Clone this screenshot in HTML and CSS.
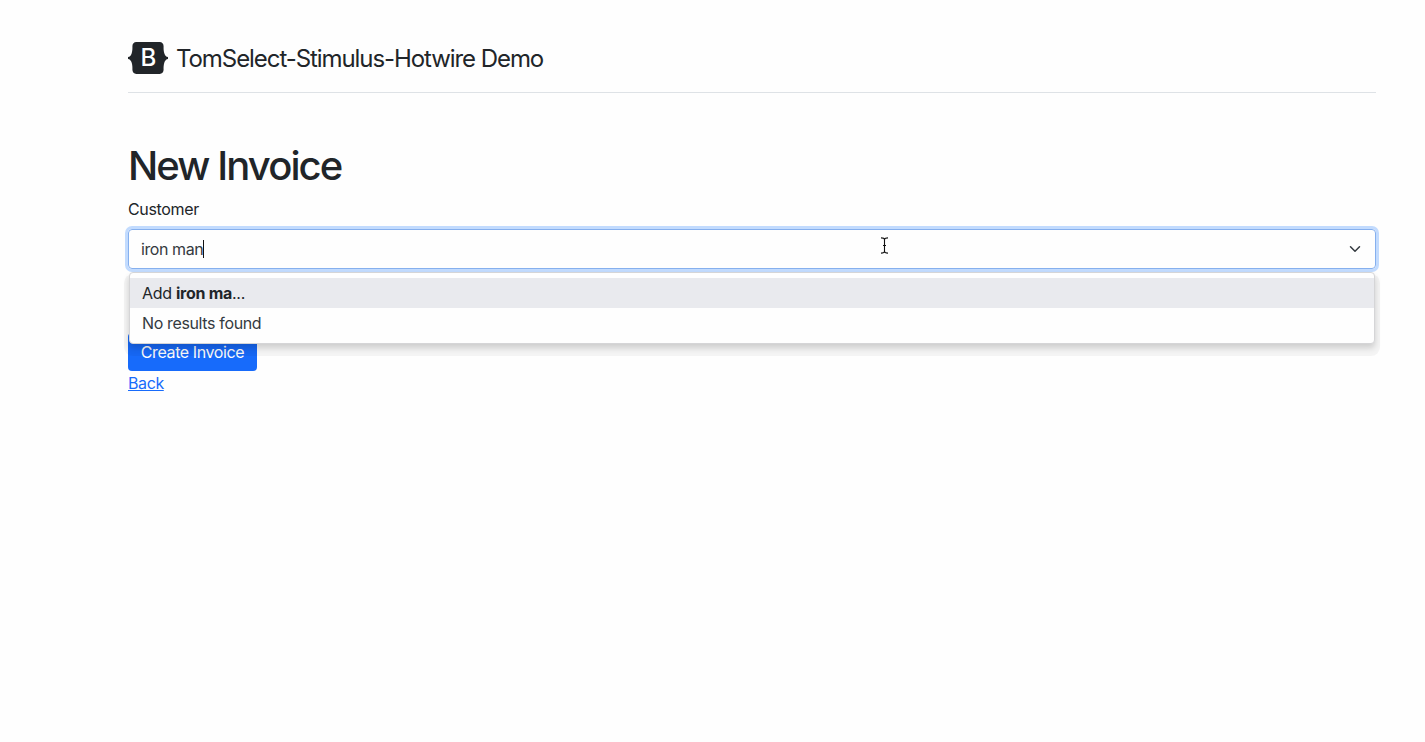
FILE: index.html
```html
<!DOCTYPE html>
<html lang="en">
<head>
<meta charset="utf-8">
<title>TomSelect-Stimulus-Hotwire Demo</title>
<link rel="stylesheet" href="styles.css">
</head>
<body>
<div class="container">
  <header class="site-header">
    <svg class="logo" width="40" height="32" viewBox="0 0 118 94" aria-hidden="true">
      <path fill="currentColor" d="M24.509 0c-6.733 0-11.715 5.893-11.492 12.284.214 6.14-.064 14.092-2.066 20.577C8.943 39.365 5.547 43.485 0 44.014v5.972c5.547.529 8.943 4.649 10.951 11.153 2.002 6.485 2.28 14.437 2.066 20.577C12.794 88.106 17.776 94 24.51 94H93.5c6.733 0 11.714-5.893 11.491-12.284-.214-6.14.064-14.092 2.066-20.577 2.009-6.504 5.396-10.624 10.943-11.153v-5.972c-5.547-.529-8.934-4.649-10.943-11.153-2.002-6.484-2.28-14.437-2.066-20.577C105.214 5.894 100.233 0 93.5 0H24.508z"/>
      <text class="logo-letter" x="60.500" y="71.500" text-anchor="middle">B</text>
    </svg>
    <span class="site-title">TomSelect-Stimulus-Hotwire Demo</span>
  </header>
  <main class="page">
    <h1 class="heading">New Invoice</h1>
    <label class="label" for="customer">Customer</label>
    <div class="select">
      <div class="control" id="customer">
        <span class="typed">iron man</span><span class="caret"></span>
        <svg class="chevron" width="16" height="12" viewBox="0 0 16 16" aria-hidden="true"><path fill="none" stroke="#343a40" stroke-linecap="round" stroke-linejoin="round" stroke-width="2" d="m2 5 6 6 6-6"/></svg>
      </div>
      <div class="dropdown">
        <div class="option active">Add <strong>iron ma</strong>...</div>
        <div class="option none">No results found</div>
      </div>
    </div>
    <button class="btn" type="button">Create Invoice</button>
    <a class="back" href="#">Back</a>
  </main>
</div>
<svg class="pointer" width="9" height="17" viewBox="0 0 9 17" aria-hidden="true"><path fill="none" stroke="#111" stroke-width="1.1" d="M1 .9c2 0 3.500.3 3.500 1.600v12c0 1.300-1.500 1.600-3.500 1.600M8 .9c-2 0-3.500.3-3.500 1.600v12c0 1.300 1.500 1.600 3.500 1.600M3 8.500h3"/></svg>
</body>
</html>
```
FILE: styles.css
```css
* { box-sizing: border-box; }
body {
  margin: 0;
  background: #fefefe;
  color: #212529;
  font: 400 16px/24px Inter, "Liberation Sans", sans-serif;
  height: 742px;
  overflow: hidden;
}
.container { padding: 42px 49px 0 128px; }
.site-header {
  display: flex;
  align-items: center;
  gap: 8px;
  height: 51px;
  padding-bottom: 18px;
  border-bottom: 1px solid #dee2e6;
}
.logo { display: block; flex: none; }
.logo-letter { fill: #fff; font: 500 71px Inter, sans-serif; }
.site-title { padding-top: 2px; font-size: 24px; line-height: 32px; letter-spacing: -1.07px; white-space: nowrap; }
.page { display: flex; flex-direction: column; align-items: flex-start; padding-top: 49px; }
.heading { margin: 0 0 8px; font-size: 40px; font-weight: 500; line-height: 48px; letter-spacing: -1.9px; }
.label { margin: -1px 0 8px; letter-spacing: -0.35px; }
.select { position: relative; width: 100%; height: 104px; }
.control {
  display: flex;
  align-items: center;
  height: 40px;
  padding: 0 12px;
  border: 1px solid #86b0ee;
  border-radius: 4px;
  box-shadow: 0 0 0 3px #c2dbfe;
  color: #343a40;
}
.typed { letter-spacing: -0.42px; }
.caret { width: 1px; height: 18px; background: #111; }
.chevron { margin-left: auto; }
.dropdown {
  position: absolute;
  top: 43px;
  left: 1px;
  right: 1px;
  height: 72px;
  padding-top: 5px;
  background: #fefefe;
  border: 1px solid #d5d5d7;
  border-radius: 4px;
  box-shadow: 0 4px 6px rgba(0, 0, 0, .16), 0 7px 0 5px rgba(0, 0, 0, .04);
}
.option { height: 30px; padding: 3px 12px; letter-spacing: -0.36px; color: #343a40; white-space: nowrap; }
.option.active { background: #e9eaee; color: #212529; letter-spacing: -0.28px; }
.btn {
  height: 38px;
  width: 129px;
  padding: 0;
  border: 0;
  border-radius: 4px;
  background: #176bfb;
  color: #fff;
  font: inherit;
  letter-spacing: -0.4px;
}
.back { color: #176bfb; letter-spacing: -0.4px; text-decoration: underline; }
.pointer { position: absolute; left: 880px; top: 237px; }
```
